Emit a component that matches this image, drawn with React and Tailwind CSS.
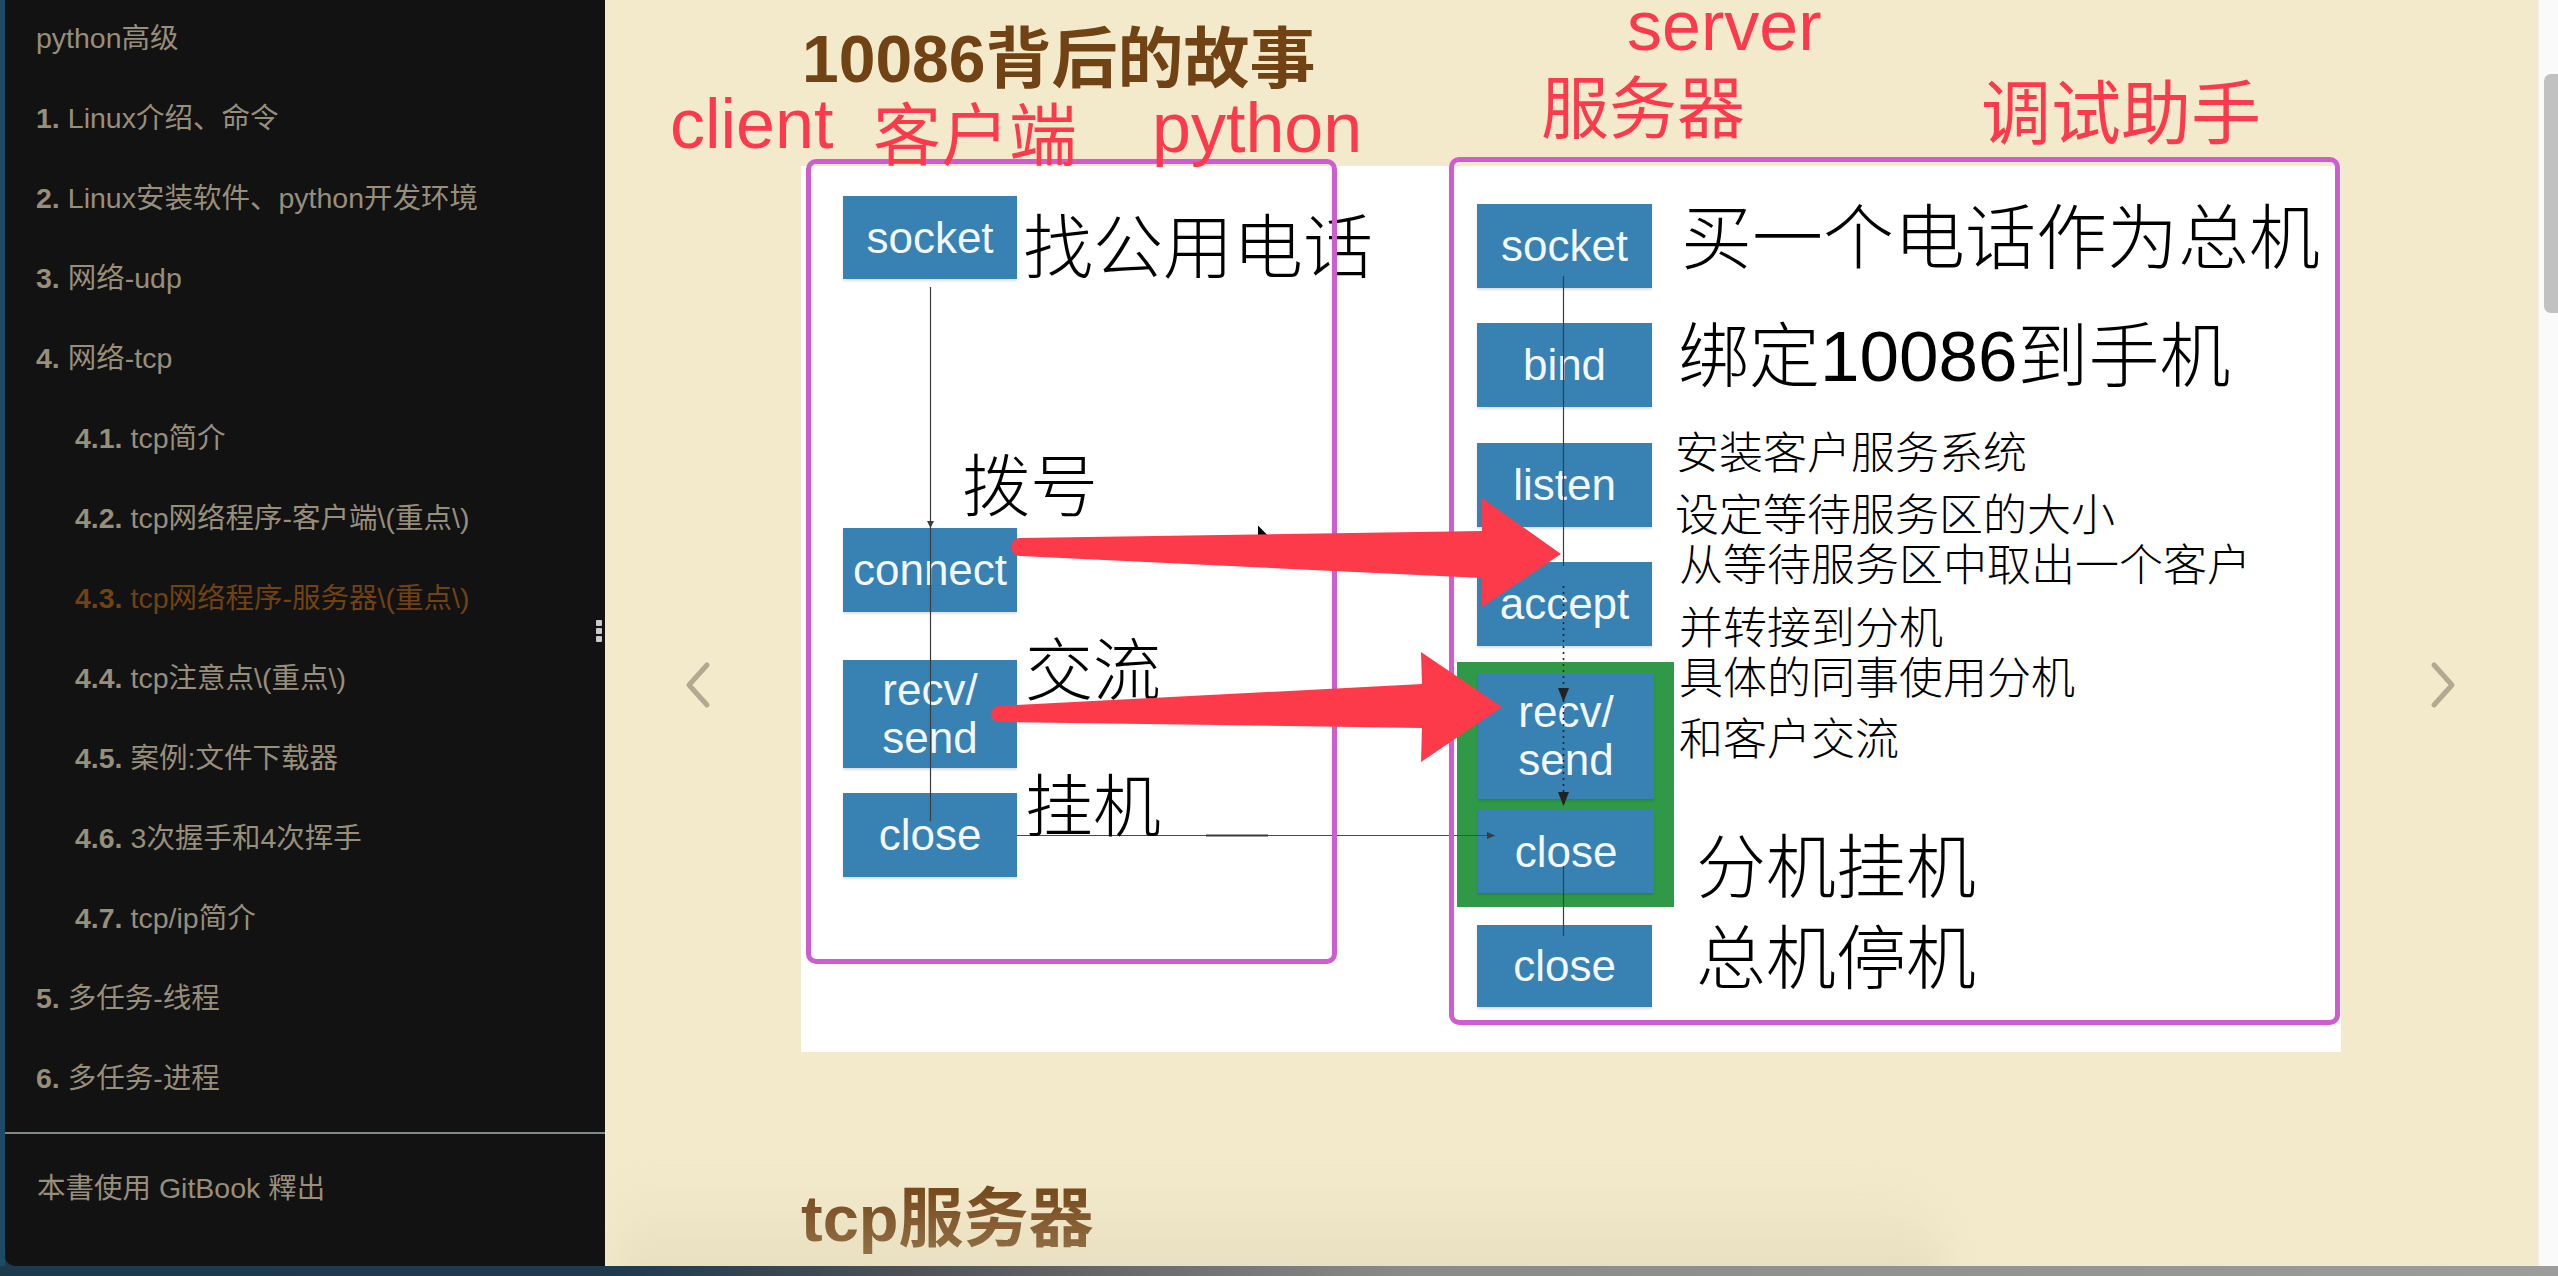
import React from "react";

const SANS = "font-['Liberation_Sans','Noto_Sans_CJK_SC',sans-serif]";

const summary = [
  { text: "python高级", level: 0 },
  { num: "1.", text: "Linux介绍、命令", level: 1 },
  { num: "2.", text: "Linux安装软件、python开发环境", level: 1 },
  { num: "3.", text: "网络-udp", level: 1 },
  { num: "4.", text: "网络-tcp", level: 1 },
  { num: "4.1.", text: "tcp简介", level: 2 },
  { num: "4.2.", text: "tcp网络程序-客户端\\(重点\\)", level: 2 },
  { num: "4.3.", text: "tcp网络程序-服务器\\(重点\\)", level: 2, active: true },
  { num: "4.4.", text: "tcp注意点\\(重点\\)", level: 2 },
  { num: "4.5.", text: "案例:文件下载器", level: 2 },
  { num: "4.6.", text: "3次握手和4次挥手", level: 2 },
  { num: "4.7.", text: "tcp/ip简介", level: 2 },
  { num: "5.", text: "多任务-线程", level: 1 },
  { num: "6.", text: "多任务-进程", level: 1 },
];

// diagram boxes, coordinates inside the slide picture
const boxes = [
  { label: "socket", x: 42, y: 30, w: 174, h: 83 },
  { label: "connect", x: 42, y: 362, w: 174, h: 84 },
  { label: "recv/\nsend", x: 42, y: 494, w: 174, h: 108 },
  { label: "close", x: 42, y: 627, w: 174, h: 84 },
  { label: "socket", x: 676, y: 38, w: 175, h: 84 },
  { label: "bind", x: 676, y: 157, w: 175, h: 84 },
  { label: "listen", x: 676, y: 277, w: 175, h: 84 },
  { label: "accept", x: 676, y: 396, w: 175, h: 84 },
  { label: "recv/\nsend", x: 677, y: 507, w: 176, h: 126 },
  { label: "close", x: 677, y: 644, w: 176, h: 83 },
  { label: "close", x: 676, y: 759, w: 175, h: 82 },
];

const labels = [
  { t: "找公用电话", x: 222, y: 48, s: 70 },
  { t: "拨号", x: 161, y: 287, s: 68 },
  { t: "交流", x: 224, y: 471, s: 68 },
  { t: "挂机", x: 224, y: 607, s: 68 },
  { t: "买一个电话作为总机", x: 880, y: 37, s: 71 },
  { t: "绑定10086到手机", x: 877, y: 155, s: 71 },
  { t: "安装客户服务系统", x: 874, y: 266, s: 44 },
  { t: "设定等待服务区的大小", x: 874, y: 328, s: 44 },
  { t: "从等待服务区中取出一个客户", x: 878, y: 378, s: 44 },
  { t: "并转接到分机", x: 878, y: 441, s: 44 },
  { t: "具体的同事使用分机", x: 878, y: 491, s: 44 },
  { t: "和客户交流", x: 878, y: 552, s: 44 },
  { t: "分机挂机", x: 895, y: 668, s: 70 },
  { t: "总机停机", x: 895, y: 759, s: 70 },
];

// red handwriting-style notes, coordinates inside the content column
const notes = [
  { t: "client", x: -131, y: 89, s: 70 },
  { t: "客户端", x: 72, y: 102, s: 68 },
  { t: "python", x: 351, y: 93, s: 70 },
  { t: "server", x: 826, y: -9, s: 70 },
  { t: "服务器", x: 740, y: 75, s: 68 },
  { t: "调试助手", x: 1180, y: 80, s: 70 },
];

function Chevron({ dir }) {
  return (
    <svg width="30" height="48" viewBox="0 0 30 48">
      <polyline
        points={dir === "left" ? "24,4 6,24 24,44" : "6,4 24,24 6,44"}
        fill="none"
        stroke="#b2a993"
        strokeWidth="5"
        strokeLinecap="round"
        strokeLinejoin="round"
      />
    </svg>
  );
}

function Slide() {
  return (
    <div className="relative mt-[74px] h-[886px] w-[1540px] bg-white">
      {/* green group behind the server recv/close */}
      <div className="absolute left-[656px] top-[496px] h-[245px] w-[217px] bg-[#2f9947]" />

      {boxes.map((b, i) => (
        <div
          key={i}
          className="absolute flex items-center justify-center whitespace-pre-line bg-[#3781b3] text-center text-[44px] leading-[48px] text-[#f3f7fb] shadow-[0_2px_2px_rgba(0,0,0,0.12)]"
          style={{ left: b.x, top: b.y, width: b.w, height: b.h }}
        >
          {b.label}
        </div>
      ))}

      {/* flow lines */}
      <svg className="absolute left-0 top-0" width="1540" height="886">
        <line x1="129.5" y1="121" x2="129.5" y2="655" stroke="#3c3c3c" strokeWidth="1.2" />
        <polygon points="126,355 133,355 129.5,362" fill="#3c3c3c" />
        <line x1="216" y1="669.5" x2="694" y2="669.5" stroke="#4a4a4a" strokeWidth="1.2" />
        <line x1="405" y1="669.5" x2="467" y2="669.5" stroke="#3a3a3a" strokeWidth="1.8" />
        <polygon points="686,666 694,669.5 686,673" fill="#3c3c3c" />
        <line x1="762.5" y1="110" x2="762.5" y2="400" stroke="#3c3c3c" strokeWidth="1.2" />
        <line x1="762.5" y1="420" x2="762.5" y2="640" stroke="#222" strokeWidth="1.6" strokeDasharray="2 4" />
        <polygon points="757,522 768,522 762.5,536" fill="#222" />
        <polygon points="757,626 768,626 762.5,640" fill="#222" />
        <line x1="762.5" y1="700" x2="762.5" y2="770" stroke="#3c3c3c" strokeWidth="1.2" />
      </svg>

      {labels.map((l, i) => (
        <div
          key={i}
          className="absolute whitespace-nowrap font-light leading-none text-black"
          style={{ left: l.x, top: l.y, fontSize: l.s }}
        >
          {l.t}
        </div>
      ))}
    </div>
  );
}

export default function App() {
  return (
    <div className={`flex h-[1276px] w-[2558px] flex-col overflow-hidden bg-[#1b3a4b] ${SANS}`}>
      <div className="flex h-[1266px]">
        <div className="w-[5px] bg-[#1d4b66]" />

        {/* Sommaire */}
        <aside className="relative flex w-[600px] flex-col rounded-bl-[10px] bg-[#121212] text-[28.5px] text-[#978e7b]">
          <ul className="-mt-[2px]">
            {summary.map((it, i) => (
              <li
                key={i}
                className={`flex h-[80px] items-center whitespace-nowrap ${
                  it.level === 2 ? "pl-[70px]" : "pl-[31px]"
                } ${it.active ? "text-[#704214]" : ""}`}
              >
                {it.num && <b className="mr-[8px] font-bold">{it.num}</b>}
                <span>{it.text}</span>
              </li>
            ))}
          </ul>
          <div className="my-[14px] h-[2px] bg-[#7e888b]" />
          <div className="flex h-[80px] items-center pl-[32px]">本書使用 GitBook 釋出</div>

          {/* poignée de redimensionnement */}
          <div className="absolute left-[591px] top-[620px] flex flex-col gap-[2px]">
            <span className="h-[6px] w-[6px] rounded-[1px] bg-[#c9c9c9]" />
            <span className="h-[6px] w-[6px] rounded-[1px] bg-[#c9c9c9]" />
            <span className="h-[6px] w-[6px] rounded-[1px] bg-[#c9c9c9]" />
          </div>
        </aside>

        {/* Page */}
        <main className="relative flex-1 overflow-hidden bg-[#f3eacb]">
          <div className="relative mx-auto w-[1540px] pt-[26px]">
            <h1 className="whitespace-nowrap pl-[1px] text-[66px] font-bold leading-none text-[#704214]">
              10086背后的故事
            </h1>

            <Slide />

            <h2 className="mt-[134px] text-[65px] font-bold leading-none text-[#704214]">tcp服务器</h2>

            {/* annotations par-dessus la capture */}
            <div className="absolute left-[5px] top-[159px] h-[805px] w-[531px] rounded-[10px] border-[5px] border-[#d05dd0]" />
            <div className="absolute left-[648px] top-[157px] h-[868px] w-[891px] rounded-[10px] border-[5px] border-[#d05dd0]" />

            {notes.map((n, i) => (
              <div
                key={i}
                className="absolute whitespace-nowrap leading-none text-[#fc3a4c]"
                style={{ left: n.x, top: n.y, fontSize: n.s }}
              >
                {n.t}
              </div>
            ))}

            <svg className="pointer-events-none absolute left-0 top-0 overflow-visible" width="1540" height="1060">
              {/* curseur */}
              <path
                d="M0 0 L0 24 L5.5 18.5 L9.5 27 L13 25.5 L9 17 L16.5 17 Z"
                transform="translate(456 523) scale(1.3)"
                fill="#000"
                stroke="#fff"
                strokeWidth="1.5"
                strokeLinejoin="round"
              />
              <path
                d="M219 538 L681 531 L681 498 L760 554 L681 607 L681 578 L219 556 A9 9 0 0 1 219 538 Z"
                fill="#fc3a4a"
              />
              <path
                d="M198 706 L621 684 L620 652 L701 707 L620 762 L621 728 L198 722 A8 8 0 0 1 198 706 Z"
                fill="#fc3a4a"
              />
            </svg>
          </div>

          <div className="absolute left-[78px] top-[661px]">
            <Chevron dir="left" />
          </div>
          <div className="absolute right-[79px] top-[661px]">
            <Chevron dir="right" />
          </div>

          {/* ombre d'une fenêtre voisine */}
          <div className="pointer-events-none absolute bottom-[-30px] left-[10px] h-[120px] w-[1330px] rounded-tr-[90px] bg-gradient-to-b from-[#f3eacb00] to-[#d9cfb1] opacity-50 blur-[18px]" />
        </main>

        {/* barre de défilement */}
        <div className="relative w-[21px] border-l-2 border-[#ececec] bg-[#fafafa]">
          <div className="absolute left-[5px] top-[74px] h-[239px] w-[16px] rounded-l-[7px] bg-[#c1c1c1]" />
        </div>
      </div>
      <div className="h-[10px] bg-[linear-gradient(to_right,#1b3a4b_0%,#1d3b4c_24%,#4f5257_36%,#8a8a8a_55%,#9c9c9c_100%)]" />
    </div>
  );
}
